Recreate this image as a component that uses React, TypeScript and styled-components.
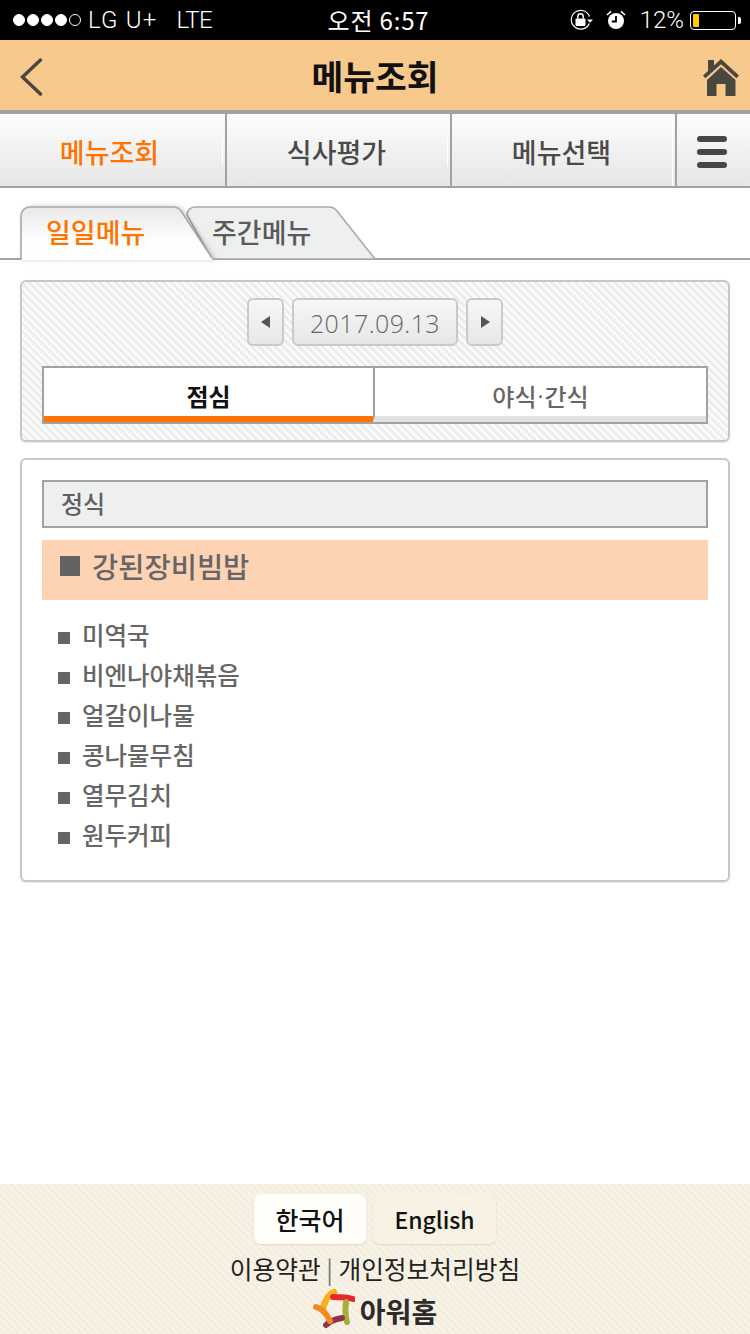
import React from "react";
import styled, { createGlobalStyle } from "styled-components";

const KR = `"Noto Sans CJK KR", "Noto Sans", sans-serif`;

const Global = createGlobalStyle`
  html, body { margin: 0; padding: 0; background: #fff; }
  body { font-family: ${KR}; }
  * { box-sizing: border-box; }
`;

const Page = styled.div`
  width: 750px;
  height: 1334px;
  display: flex;
  flex-direction: column;
  overflow: hidden;
  background: #fff;
`;

const StatusBar = styled.div`
  height: 40px;
  background: #000;
  color: #fff;
  display: grid;
  grid-template-columns: 1fr auto 1fr;
  align-items: center;
  padding: 0 6px 0 13px;
  font-family: "Roboto", sans-serif;
  font-weight: 300;
  font-size: 24px;
`;
const StatusLeft = styled.div`
  display: flex;
  align-items: center;
`;
const Dots = styled.div`
  display: flex;
  gap: 2px;
  margin-right: 7px;
`;
const Dot = styled.span<{ $on: boolean }>`
  width: 12px;
  height: 12px;
  border-radius: 50%;
  border: 1px solid #fff;
  background: ${(p) => (p.$on ? "#fff" : "transparent")};
`;
const Carrier = styled.span`
  margin-right: 19px;
  letter-spacing: 1.2px;
`;
const Network = styled.span`
  letter-spacing: -0.6px;
`;
const Clock = styled.div`
  font-family: ${KR};
  font-weight: 400;
  font-size: 24px;
  letter-spacing: 0.8px;
  padding-bottom: 2px;
`;
const StatusRight = styled.div`
  display: flex;
  align-items: center;
  justify-content: flex-end;
`;
const Percent = styled.span`
  margin: 0 6px 0 14px;
`;
const Battery = styled.div`
  width: 46px;
  height: 19px;
  border: 1px solid #fff;
  border-radius: 4px;
  padding: 2px;
  position: relative;
  margin-right: 8px;
  &::after {
    content: "";
    position: absolute;
    right: -6px;
    top: 5px;
    width: 3px;
    height: 7px;
    background: #fff;
    border-radius: 0 2px 2px 0;
  }
`;
const BatteryFill = styled.div`
  width: 6px;
  height: 100%;
  background: #ffcc00;
  border-radius: 1px;
`;

const Header = styled.header`
  height: 74px;
  background: #f7c98c;
  border-bottom: 4px solid #a2a2a2;
  display: flex;
  align-items: center;
  justify-content: space-between;
  padding: 4px 0 0 20px;
  position: relative;
`;
const Title = styled.h1`
  position: absolute;
  left: 0;
  right: 0;
  top: 11px;
  margin: 0;
  text-align: center;
  font-size: 34.5px;
  line-height: 48px;
  font-weight: 700;
  color: #111;
`;
const HeaderIcon = styled.svg`
  display: block;
`;

const Nav = styled.nav`
  height: 74px;
  display: grid;
  grid-template-columns: 227px 225px 225px 73px;
  border-bottom: 2px solid #a2a2a2;
  background: linear-gradient(#fdfdfd, #e6e6e6);
`;
const NavItem = styled.div<{ $active?: boolean; $edge?: boolean }>`
  position: relative;
  display: flex;
  align-items: center;
  justify-content: center;
  border-right: 2px solid #a2a2a2;
  font-size: 27px;
  font-weight: 500;
  padding: 2px ${(p) => (p.$active ? 6 : 4)}px 0 0;
  color: ${(p) => (p.$active ? "#ff7300" : "#4a4a4a")};
  &::after {
    content: "";
    position: absolute;
    right: 2px;
    width: 1px;
    top: ${(p) => (p.$edge ? 0 : 22)}px;
    bottom: ${(p) => (p.$edge ? 0 : 20)}px;
    background: #fff;
  }
  &:last-child { border-right: 0; padding: 3px 3px 0 0; }
  &:last-child::after { display: none; }
`;
const Burger = styled.div`
  width: 30px;
  display: flex;
  flex-direction: column;
  gap: 7px;
  span {
    height: 6px;
    border-radius: 3px;
    background: #464646;
  }
`;

const TabRow = styled.div`
  height: 54px;
  margin-top: 18px;
  padding: 0 0 0 20px;
  display: flex;
  align-items: flex-end;
  position: relative;
  &::before {
    content: "";
    position: absolute;
    left: 0;
    right: 0;
    bottom: 0;
    height: 2px;
    background: #a2a2a2;
  }
`;
const Tab = styled.div<{ $active?: boolean; $w: number }>`
  position: relative;
  width: ${(p) => p.$w}px;
  height: 54px;
  z-index: ${(p) => (p.$active ? 2 : 1)};
  margin-right: ${(p) => (p.$active ? -27 : 0)}px;
  font-size: 27px;
  font-weight: 500;
  line-height: 52px;
  padding-left: 26px;
  color: ${(p) => (p.$active ? "#ff7300" : "#5a5a5a")};
  span { position: relative; }
`;
const TabShape = styled.svg<{ $shadow?: boolean }>`
  position: absolute;
  left: 0;
  top: 0;
  filter: ${(p) => (p.$shadow ? "drop-shadow(2px 0 2px rgba(0,0,0,0.2))" : "none")};
`;

const Content = styled.main`
  padding: 20px 20px 0;
  display: flex;
  flex-direction: column;
  gap: 16px;
  flex: 1;
`;
const Panel = styled.section`
  border: 2px solid #c8c8c8;
  border-radius: 6px;
  box-shadow: 0 1px 2px rgba(0, 0, 0, 0.1);
  padding: 0 20px;
`;
const DatePanel = styled(Panel)`
  height: 162px;
  padding-top: 16px;
  background: repeating-linear-gradient(45deg, #fafafa 0 3px, #ececec 3px 5.6px);
`;
const DateRow = styled.div`
  display: flex;
  justify-content: center;
  gap: 8px;
  height: 48px;
`;
const DateBtn = styled.div`
  border: 2px solid #cacaca;
  border-radius: 6px;
  background: linear-gradient(#f7f7f7, #e6e7e7);
  display: flex;
  align-items: center;
  justify-content: center;
`;
const ArrowBtn = styled(DateBtn)`
  width: 37px;
`;
const DateValue = styled(DateBtn)`
  width: 166px;
  font-family: "Open Sans", sans-serif;
  font-weight: 300;
  font-size: 25px;
  color: #666;
  letter-spacing: 0.4px;
  padding-top: 1px;
`;
const MealTabs = styled.div`
  margin-top: 20px;
  height: 58px;
  border: 2px solid #a2a2a2;
  display: grid;
  grid-template-columns: 329px 1fr;
  background: #fff;
`;
const MealTab = styled.div<{ $active?: boolean }>`
  display: flex;
  align-items: center;
  justify-content: center;
  font-size: 24px;
  padding-top: 6px;
  font-weight: ${(p) => (p.$active ? 700 : 500)};
  color: ${(p) => (p.$active ? "#111" : "#666")};
  border-bottom: 6px solid ${(p) => (p.$active ? "#ff7300" : "#e2e2e2")};
  & + & { border-left: 2px solid #a2a2a2; }
`;
const MiddleDot = styled.span`
  font-family: "Liberation Sans", sans-serif;
`;

const MenuPanel = styled(Panel)`
  height: 424px;
  padding-top: 20px;
  background: #fff;
`;
const Category = styled.div`
  height: 48px;
  border: 2px solid #a2a2a2;
  background: #eef0ef;
  font-size: 24px;
  font-weight: 500;
  color: #5f5f5f;
  padding: 0 0 3px 17px;
  display: flex;
  align-items: center;
`;
const MainDish = styled.div`
  margin-top: 12px;
  height: 60px;
  background: #fdd3b3;
  display: flex;
  align-items: center;
  gap: 12px;
  padding: 0 0 9px 18px;
  font-size: 28.5px;
  font-weight: 500;
  color: #666;
`;
const MainBullet = styled.span`
  width: 20px;
  height: 20px;
  background: #626262;
  margin-top: 1px;
`;
const DishList = styled.ul`
  list-style: none;
  margin: 15px 0 0;
  padding: 0 0 0 16px;
`;
const Dish = styled.li`
  height: 40px;
  display: flex;
  align-items: center;
  gap: 12px;
  font-size: 24.5px;
  font-weight: 500;
  color: #666;
  padding-bottom: 1px;
  &::before {
    content: "";
    width: 12px;
    height: 12px;
    background: #666;
    margin-top: 6px;
  }
`;

const Footer = styled.footer`
  height: 150px;
  padding-top: 10px;
  background-color: #f7f1e3;
  background-image: repeating-linear-gradient(45deg, rgba(255,255,255,0.2) 0 2px, rgba(190,170,130,0.04) 2px 5px);
  display: flex;
  flex-direction: column;
  align-items: center;
`;
const LangRow = styled.div`
  display: flex;
  gap: 7px;
`;
const Lang = styled.div<{ $active?: boolean }>`
  width: ${(p) => (p.$active ? 112 : 123)}px;
  height: 50px;
  border-radius: 7px;
  background: ${(p) => (p.$active ? "#fffefb" : "#f8f2e5")};
  box-shadow: 0 1px 2px rgba(120, 100, 60, 0.18);
  display: flex;
  align-items: center;
  justify-content: center;
  font-size: ${(p) => (p.$active ? 25 : 23)}px;
  font-weight: 500;
  color: #111;
  padding-bottom: 1px;
`;
const Links = styled.div`
  margin-top: 2px;
  font-size: 24.7px;
  line-height: 44px;
  color: #222;
  height: 36px;
`;
const Sep = styled.span`
  color: #777;
`;
const Brand = styled.div`
  display: flex;
  align-items: center;
  margin-top: 6px;
  gap: 5px;
  font-size: 28px;
  font-weight: 700;
  color: #2b2b2b;
  span { line-height: 38px; position: relative; top: 2px; }
`;

const dishes = ["미역국", "비엔나야채볶음", "얼갈이나물", "콩나물무침", "열무김치", "원두커피"];

export default function App() {
  return (
    <Page>
      <Global />
      <StatusBar>
        <StatusLeft>
          <Dots>
            {[1, 1, 1, 1, 0].map((d, i) => (
              <Dot key={i} $on={!!d} />
            ))}
          </Dots>
          <Carrier>LG U+</Carrier>
          <Network>LTE</Network>
        </StatusLeft>
        <Clock>오전 6:57</Clock>
        <StatusRight>
          <svg width="24" height="22" viewBox="0 0 24 22" fill="none">
            <path d="M19.3 14.5A9.4 9.4 0 1 1 19.5 7.5" stroke="#fff" strokeWidth="1.2" />
            <path d="M17 10.5h6l-3 3.2z" fill="#fff" />
            <rect x="5.5" y="9.5" width="10" height="7.5" rx="1" fill="#fff" />
            <path d="M7.8 9.5V7.4a2.7 2.7 0 0 1 5.4 0v2.1" stroke="#fff" strokeWidth="1.5" />
          </svg>
          <svg width="20" height="20" viewBox="0 0 20 20" style={{ marginLeft: 12 }}>
            <circle cx="10" cy="11" r="8" fill="#fff" />
            <path d="M10 6v5.5H5.8" stroke="#000" strokeWidth="1.8" fill="none" />
            <path d="M1 5 5 1.3M19 5 15 1.3" stroke="#fff" strokeWidth="1.6" />
          </svg>
          <Percent>12%</Percent>
          <Battery>
            <BatteryFill />
          </Battery>
        </StatusRight>
      </StatusBar>

      <Header>
        <HeaderIcon width="24" height="38" viewBox="0 0 24 38" fill="none">
          <path d="M20.5 2 2.5 19l18 17" stroke="#4a4640" strokeWidth="3.4" strokeLinecap="round" strokeLinejoin="miter" />
        </HeaderIcon>
        <Title>메뉴조회</Title>
        <HeaderIcon width="38" height="40" viewBox="0 0 38 40" style={{ marginRight: 10 }}>
          <path d="M6 3h6v5.4L19 2l18 16.5-2.6 2.7L19 7.3 3.4 21.2 1 18.5l5-4.6z" fill="#4a4640" />
          <path d="M19 10 33.5 23v16H23.5V27h-9v12H5V23z" fill="#4a4640" />
        </HeaderIcon>
      </Header>

      <Nav>
        <NavItem $active>메뉴조회</NavItem>
        <NavItem>식사평가</NavItem>
        <NavItem $edge>메뉴선택</NavItem>
        <NavItem>
          <Burger>
            <span />
            <span />
            <span />
          </Burger>
        </NavItem>
      </Nav>

      <TabRow>
        <Tab $active $w={193}>
          <TabShape $shadow width="193" height="54" viewBox="0 0 193 54">
            <defs>
              <linearGradient id="tabA" x1="0" y1="0" x2="0" y2="1">
                <stop offset="0" stopColor="#e9e9e9" />
                <stop offset="0.6" stopColor="#fdfdfd" />
                <stop offset="1" stopColor="#fff" />
              </linearGradient>
            </defs>
            <path d="M1 54V10a9 9 0 0 1 9-9h143a10 10 0 0 1 8 4l32 49z" fill="url(#tabA)" />
            <path d="M1 54V10a9 9 0 0 1 9-9h143a10 10 0 0 1 8 4l31 47" fill="none" stroke="#a9a9a9" strokeWidth="1.6" />
          </TabShape>
          <span>일일메뉴</span>
        </Tab>
        <Tab $w={190}>
          <TabShape width="190" height="54" viewBox="0 0 190 54">
            <path d="M1 9a8 8 0 0 1 8-8h134a10 10 0 0 1 8 4l38 48H26z" fill="#eef0ef" stroke="#a9a9a9" strokeWidth="1.6" />
          </TabShape>
          <span>주간메뉴</span>
        </Tab>
      </TabRow>

      <Content>
        <DatePanel>
          <DateRow>
            <ArrowBtn>
              <svg width="12" height="14" viewBox="0 0 12 14">
                <path d="M10 1v12L1 7z" fill="#555" />
              </svg>
            </ArrowBtn>
            <DateValue>2017.09.13</DateValue>
            <ArrowBtn>
              <svg width="12" height="14" viewBox="0 0 12 14">
                <path d="M2 1v12l9-6z" fill="#555" />
              </svg>
            </ArrowBtn>
          </DateRow>
          <MealTabs>
            <MealTab $active>점심</MealTab>
            <MealTab>
              야식<MiddleDot>·</MiddleDot>간식
            </MealTab>
          </MealTabs>
        </DatePanel>

        <MenuPanel>
          <Category>정식</Category>
          <MainDish>
            <MainBullet />
            강된장비빔밥
          </MainDish>
          <DishList>
            {dishes.map((d) => (
              <Dish key={d}>{d}</Dish>
            ))}
          </DishList>
        </MenuPanel>
      </Content>

      <Footer>
        <LangRow>
          <Lang $active>한국어</Lang>
          <Lang>English</Lang>
        </LangRow>
        <Links>
          이용약관 <Sep>|</Sep> 개인정보처리방침
        </Links>
        <Brand>
          <svg width="42" height="41" viewBox="0 0 42 41" fill="none" strokeLinecap="round">
            <path d="M21 4c-6 2-9 9-11 16" stroke="#f6b21b" strokeWidth="6.5" />
            <path d="M20 9c7 0 14 0 20 2" stroke="#e8262d" strokeWidth="6" />
            <path d="M33 14c-1 7-1 13 1 20" stroke="#a6ad3a" strokeWidth="6" />
            <path d="M29 30c-6 1-12 3-16 7" stroke="#8f3350" strokeWidth="6" />
            <path d="M3 19c6 2 11 7 14 14" stroke="#f28a23" strokeWidth="6" />
          </svg>
          <span>아워홈</span>
        </Brand>
      </Footer>
    </Page>
  );
}
